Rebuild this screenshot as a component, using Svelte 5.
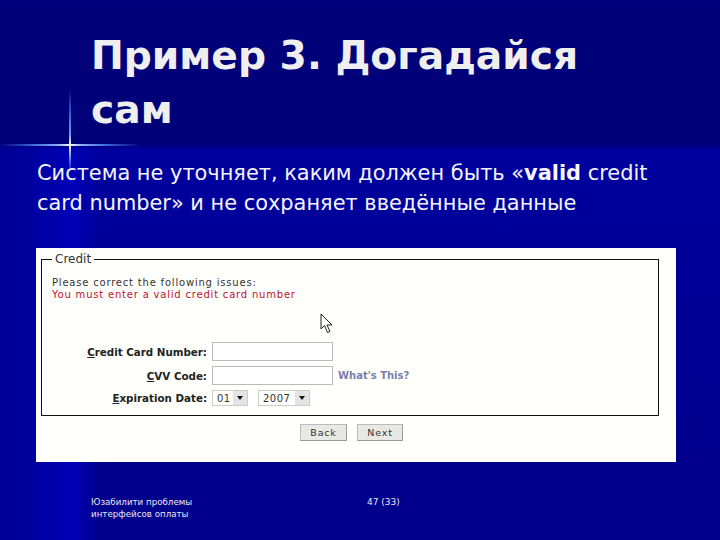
<script>
  let cardNumber = $state('');
  let cvv = $state('');
  const months = ['01'];
  const years = ['2007'];
</script>

<div class="slide">
  <!-- star flare on the title rule -->
  <div class="flare-h"></div>
  <div class="flare-v"></div>

  <h1>Пример 3. Догадайся сам</h1>
  <p class="lead">Система не уточняет, каким должен быть «<b>valid</b> credit card number» и не сохраняет введённые данные</p>

  <div class="shot">
    <fieldset>
      <legend>Credit</legend>
      <div class="msg">Please correct the following issues:</div>
      <div class="msg err">You must enter a valid credit card number</div>
      <svg class="cursor" width="13" height="21" viewBox="0 0 13 21">
        <path d="M1 1v15l3.5-3.5 3 7 2.500-1-3-6.500h5z" fill="#fff" stroke="#222" stroke-width="1"/>
      </svg>
      <div class="rows">
        <label for="cc"><u>C</u>redit Card Number:</label>
        <input id="cc" bind:value={cardNumber} />
        <span></span>
        <label for="cvv"><u>C</u>VV Code:</label>
        <input id="cvv" bind:value={cvv} />
        <a href="#cvv">What's This?</a>
        <label for="m"><u>E</u>xpiration Date:</label>
        <div class="dates">
          <div class="sel" id="m">{months[0]}<i></i></div>
          <div class="sel year">{years[0]}<i></i></div>
        </div>
        <span></span>
      </div>
    </fieldset>
    <div class="buttons">
      <button class="back">Back</button>
      <button class="next">Next</button>
    </div>
  </div>

  <footer>
    <div class="foot-l">Юзабилити проблемы<br>интерфейсов оплаты</div>
    <div class="foot-n">47 (33)</div>
  </footer>
</div>

<style>
  :global(body) {
    margin: 0;
  }

  .slide {
    position: relative;
    width: 720px;
    height: 540px;
    overflow: hidden;
    box-sizing: border-box;
    padding-top: 29px;
    font-family: "DejaVu Sans", Verdana, sans-serif;
    color: #f0f0f0;
    background:
      linear-gradient(180deg, #00007a 0, #000078 145px, transparent 149px),
      linear-gradient(90deg, #000094 0, #0000a8 50px, #0000b8 70px, transparent 100px),
      linear-gradient(180deg, #00009e 149px, #00008c 480px);
  }

  .flare-h {
    position: absolute;
    left: 0;
    top: 144px;
    width: 140px;
    height: 2px;
    background: linear-gradient(90deg, transparent, #3f6fe0 25%, #8fb0f8 42%, #fff 50%, #8fb0f8 58%, #3f6fe0 75%, transparent);
  }

  .flare-v {
    position: absolute;
    left: 69px;
    top: 88px;
    width: 2px;
    height: 85px;
    background: linear-gradient(180deg, transparent, #2f5fd8 30%, #6f9cf0 55%, #fff 67%, #6f9cf0 80%, transparent);
  }

  h1 {
    position: relative;
    margin: 0 0 0 91px;
    width: 560px;
    font-size: 39.200px;
    line-height: 54px;
    font-weight: bold;
    color: #efefef;
  }

  .lead {
    position: relative;
    margin: 21px 0 0 37px;
    width: 640px;
    font-size: 20.900px;
    line-height: 30px;
    color: #f4f4ff;
  }

  .shot {
    margin: 30px 0 0 36px;
    width: 640px;
    height: 214px;
    box-sizing: border-box;
    padding: 4px 17px 0 5px;
    background: #fffffb;
    color: #222;
    font-size: 10px;
  }

  fieldset {
    position: relative;
    margin: 0;
    height: 164px;
    box-sizing: border-box;
    padding: 11px 10px 0;
    border: 1px solid #111;
  }

  legend {
    padding: 0 3px;
    font-size: 12px;
    color: #333;
  }

  .msg {
    line-height: 12px;
    letter-spacing: 0.8px;
    color: #333;
  }

  .err {
    color: #c01030;
  }

  .cursor {
    position: absolute;
    left: 278px;
    top: 47px;
  }

  .rows {
    display: grid;
    grid-template-columns: 155px 121px auto;
    column-gap: 5px;
    row-gap: 5px;
    align-items: center;
    margin-top: 41px;
  }

  label {
    text-align: right;
    font-weight: bold;
    font-size: 10.300px;
    color: #222;
  }

  input {
    width: 121px;
    height: 19px;
    box-sizing: border-box;
    border: 1px solid #bbb;
    background: #fff;
    padding: 0;
  }

  a {
    font-weight: bold;
    font-size: 10px;
    color: #7a80ac;
    text-decoration: none;
  }

  .dates {
    display: flex;
    gap: 10px;
  }

  .sel {
    display: flex;
    align-items: center;
    justify-content: space-between;
    height: 16px;
    width: 36px;
    box-sizing: border-box;
    padding-left: 4px;
    border: 1px solid #ccc;
    letter-spacing: 0.5px;
    color: #333;
  }

  .year {
    width: 52px;
  }

  .sel i {
    display: flex;
    align-items: center;
    justify-content: center;
    width: 14px;
    height: 14px;
    background: #e4e4e4;
  }

  .sel i::after {
    content: "";
    border: 3.500px solid transparent;
    border-top: 4px solid #111;
    border-bottom: 0;
  }

  .buttons {
    display: flex;
    gap: 10px;
    margin: 8px 0 0 259px;
  }

  button {
    height: 17px;
    padding: 0;
    border: 1px solid #bbb;
    border-right-color: #999;
    border-bottom-color: #999;
    background: #e8e8e4;
    font-family: inherit;
    font-size: 9.500px;
    letter-spacing: 0.8px;
    color: #333;
  }

  .back {
    width: 47px;
  }

  .next {
    width: 46px;
  }

  footer {
    display: flex;
    margin: 34px 0 0 91px;
    font-size: 8.700px;
    line-height: 12px;
    color: #e8e8f4;
  }

  .foot-l {
    width: 276px;
  }

  .foot-n {
    font-size: 9px;
  }
</style>
